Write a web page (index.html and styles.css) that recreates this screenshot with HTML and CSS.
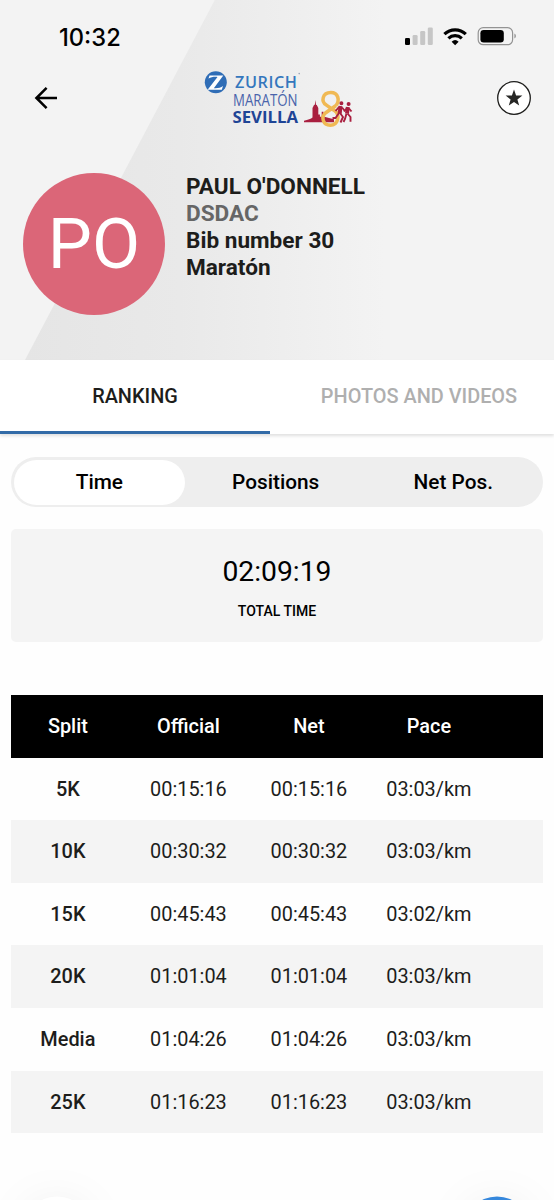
FILE: index.html
```html
<!DOCTYPE html>
<html lang="en">
<head>
    <meta charset="UTF-8">
    <meta name="viewport" content="width=device-width, initial-scale=1.0">
    <link rel="stylesheet" href="styles.css">
    <title>Paul O'Donnell - Ranking</title>
</head>
<body>
    <header class="header">
        <div class="status-bar">
            <span class="clock">10:32</span>
            <svg class="status-icons" width="112" height="20" viewBox="0 0 112 20">
                <rect x="0" y="11" width="5" height="7" rx="1.3" fill="#000"/>
                <rect x="7.6" y="8" width="5" height="10" rx="1.3" fill="#c6c6c6"/>
                <rect x="15.2" y="4" width="5" height="14" rx="1.3" fill="#c6c6c6"/>
                <rect x="22.8" y="0.5" width="5" height="17.5" rx="1.3" fill="#c6c6c6"/>
                <g fill="none" stroke="#000" stroke-width="3.2">
                    <path d="M39.4 7.2a15.5 15.5 0 0 1 21.4 0"/>
                    <path d="M43.4 11.3a9.8 9.8 0 0 1 13.4 0"/>
                </g>
                <path d="M46.6 14.7a5.2 5.2 0 0 1 7 0L50.1 18.2z" fill="#000"/>
                <rect x="73.2" y="0.7" width="34.4" height="17" rx="5" fill="none" stroke="#939393" stroke-width="1.2"/>
                <rect x="75.4" y="2.9" width="23.4" height="12.7" rx="3.3" fill="#000"/>
                <path d="M109.4 6.6v5a2.8 2.8 0 0 0 0-5z" fill="#939393"/>
            </svg>
        </div>

        <nav class="top-nav">
            <svg class="back" width="24" height="24" viewBox="0 0 24 24">
                <path d="M12.6 1.8L2.4 12l10.2 10.2M2.4 12h20.6" fill="none" stroke="#000" stroke-width="2.5"/>
            </svg>
            <svg class="logo" width="150" height="60" viewBox="0 0 150 60">
                <circle cx="11.8" cy="12.3" r="11" fill="#2f6db6"/>
                <path d="M5.5 5.4h13.8L9.8 18.2c4 .2 6.9-.2 9.2-2.1l-1.2 3.6H3.6L13.5 6.9c-3.7-.2-6.5.1-9 1.7z" fill="#fff"/>
                <text class="logo-zurich" x="31" y="18" textLength="62">ZURICH</text>
                <text class="logo-maraton" x="29" y="36.3" textLength="64.5" lengthAdjust="spacingAndGlyphs">MARATÓN</text>
                <text class="logo-sevilla" x="28.5" y="52.6" textLength="65.5" lengthAdjust="spacingAndGlyphs">SEVILLA</text>
                <circle cx="95.2" cy="3.6" r="0.8" fill="#9aa5b5"/>
                <!-- cathedral skyline -->
                <path d="M100 52.3v-1.5c4-1.2 7-1.8 8.5-3.4V38l1.5-3 .8-.2.6-4.8.6 4.8.8.2 1.5 3v6.5h1.6v2.3h1.8v-5h1.8v4.7l5.5 1.4 5 1.3v3.1z" fill="#a91f3f"/>
                <!-- the 8 ribbon -->
                <path d="M132 35.5c4-5 2.4-13-5.2-13-8.4 0-10.2 9-4.4 12.6l8.3 5.6c6 4.8 3 14.6-4.3 14.6-7.6 0-9.8-8.4-4.6-12.6l10.2-7.2" fill="none" stroke="#f0b954" stroke-width="3.5"/>
                <!-- runners -->
                <g fill="none" stroke="#a91f3f" stroke-width="2">
                    <circle cx="137.4" cy="33.2" r="1" fill="#a91f3f"/>
                    <path d="M136.5 36l-.8 7.5" stroke-width="4"/>
                    <path d="M135 37l-3.4 4M138 37.5l3 3.5M136 43l3 4-2.5 5.5M135 43l-3.5 5h-3" stroke-width="1.9"/>
                    <circle cx="144.6" cy="34" r="1" fill="#a91f3f"/>
                    <path d="M143.8 37l-.8 6.5" stroke-width="4"/>
                    <path d="M143 38l-3 3.5M145 38.5l2.5 3M143.5 43.5l3 3.5v4.8M142.5 43.5l-1.5 5.5-1.5 3" stroke-width="1.9"/>
                </g>
            </svg>
            <svg class="favourite" width="36" height="36" viewBox="0 0 36 36">
                <circle cx="18" cy="18" r="16.3" fill="#fff" stroke="#1d1d1b" stroke-width="1.3"/>
                <path d="M18 9.6l2.1 5.9 6.3.1-5 3.9 1.8 6-5.2-3.5-5.2 3.5 1.8-6-5-3.9 6.3-.1z" fill="#262624"/>
            </svg>
        </nav>

        <div class="profile">
            <div class="avatar">PO</div>
            <div class="runner">
                <div>PAUL O'DONNELL</div>
                <div class="club">DSDAC</div>
                <div>Bib number 30</div>
                <div>Maratón</div>
            </div>
        </div>
    </header>

    <div class="tabs">
        <div class="tab active">RANKING</div>
        <div class="tab">PHOTOS AND VIDEOS</div>
    </div>

    <main class="content">
        <div class="segments">
            <div class="segment selected">Time</div>
            <div class="segment">Positions</div>
            <div class="segment">Net Pos.</div>
        </div>

        <div class="total">
            <div class="total-time">02:09:19</div>
            <div class="total-label">TOTAL TIME</div>
        </div>

        <div class="splits">
            <div class="row head"><span>Split</span><span>Official</span><span>Net</span><span>Pace</span></div>
            <div class="row"><span>5K</span><span>00:15:16</span><span>00:15:16</span><span>03:03/km</span></div>
            <div class="row"><span>10K</span><span>00:30:32</span><span>00:30:32</span><span>03:03/km</span></div>
            <div class="row"><span>15K</span><span>00:45:43</span><span>00:45:43</span><span>03:02/km</span></div>
            <div class="row"><span>20K</span><span>01:01:04</span><span>01:01:04</span><span>03:03/km</span></div>
            <div class="row"><span>Media</span><span>01:04:26</span><span>01:04:26</span><span>03:03/km</span></div>
            <div class="row"><span>25K</span><span>01:16:23</span><span>01:16:23</span><span>03:03/km</span></div>
        </div>
    </main>

    <svg class="fabs" width="554" height="60" viewBox="0 0 554 60">
        <circle class="fab fab-left" cx="57" cy="90.5" r="34"/>
        <circle class="fab fab-right" cx="497" cy="90.5" r="34"/>
    </svg>
</body>
</html>
```

FILE: styles.css
```css
* {
    box-sizing: border-box;
}

body {
    margin: 0;
    height: 1200px;
    overflow: hidden;
    position: relative;
    background-color: #fefefe;
    color: #1d1d1b;
    font-family: Roboto, sans-serif;
}

.header {
    height: 360px;
    padding-top: 24px;
    /* diagonal band fading out to the right */
    background:
        linear-gradient(117.8deg, #f3f3f3 0, #f3f3f3 189.5px, transparent 190.5px),
        linear-gradient(90deg, #e5e5e5 25px, #e9e9e9 180px, #f3f3f3 385px);
}

.status-bar {
    display: flex;
    justify-content: space-between;
    height: 48px;
    padding: 0 37px 0 59px;
}

.clock {
    font-family: Inter, sans-serif;
    font-size: 23.7px;
    font-weight: 550;
    line-height: 27px;
    color: #000;
}

.status-icons {
    margin-top: 3px;
}

.top-nav {
    display: flex;
    align-items: flex-start;
    height: 100px;
    padding: 0 22px 0 33.5px;
}

.back {
    margin-top: 14px;
}

.logo {
    margin: -2px 0 0 146.5px;
    overflow: visible;
}

.favourite {
    margin: 8px 0 0 auto;
}

.logo-zurich {
    font-family: "Open Sans", sans-serif;
    font-size: 16.2px;
    font-weight: 600;
    fill: #3477bd;
}

.logo-maraton {
    font-family: "Open Sans", sans-serif;
    font-size: 15.5px;
    font-weight: 400;
    fill: #4a64ab;
}

.logo-sevilla {
    font-family: "Open Sans", sans-serif;
    font-size: 16.5px;
    font-weight: 700;
    fill: #1f4596;
}

.profile {
    display: flex;
    padding: 1px 0 0 23px;
}

.avatar {
    display: flex;
    align-items: center;
    justify-content: center;
    width: 142px;
    height: 142px;
    padding-bottom: 1px;
    border-radius: 50%;
    background-color: #db6678;
    color: #fff;
    font-size: 70px;
}

.runner {
    margin-left: 21px;
    font-size: 22.6px;
    font-weight: 700;
    line-height: 27px;
}

.club {
    color: #666;
}

.tabs {
    display: flex;
    height: 74px;
    background-color: #fff;
    box-shadow: 0 2px 3px rgba(0, 0, 0, 0.12);
}

.tab {
    flex: 1;
    padding-left: 14px;
    line-height: 73px;
    text-align: center;
    font-size: 19.9px;
    font-weight: 500;
    color: #afafaf;
}

.tab.active {
    flex: none;
    width: 270px;
    padding: 0;
    color: #1d1d1b;
    border-bottom: 3px solid #326ba7;
}

.content {
    padding: 23px 11.5px 0 11.4px;
}

.segments {
    display: flex;
    height: 50px;
    padding: 2.5px;
    border-radius: 25px;
    background-color: #eee;
}

.segment {
    flex: 1;
    padding-left: 4px;
    line-height: 45px;
    text-align: center;
    font-size: 20.8px;
    font-weight: 500;
    color: #000;
}

.segment.selected {
    flex: none;
    width: 171px;
    padding: 0;
    border-radius: 23px;
    background-color: #fff;
}

.total {
    height: 113px;
    margin-top: 22.4px;
    padding-top: 25px;
    border-radius: 5px;
    background-color: #f4f4f4;
    text-align: center;
    color: #000;
}

.total-time {
    font-size: 28.3px;
    line-height: 36px;
}

.total-label {
    margin-top: 11.5px;
    font-size: 14px;
    font-weight: 500;
    line-height: 18px;
}

.splits {
    margin-top: 52.6px;
}

.row {
    display: grid;
    grid-template-columns: 113px 128px 113px 127px;
    height: 62.6px;
    line-height: 63px;
    text-align: center;
    font-size: 19.9px;
}

.row:nth-child(odd) {
    background-color: #f4f4f4;
}

.row span:first-child {
    font-weight: 500;
}

.row.head {
    background-color: #000;
    color: #fff;
    font-weight: 500;
}

/* floating buttons over the bottom edge */
.fabs {
    position: absolute;
    left: 0;
    bottom: 0;
    overflow: hidden;
}

.fab {
    filter: drop-shadow(0 4px 20px rgba(0, 0, 0, 0.06));
}

.fab-left {
    fill: #fff;
}

.fab-right {
    fill: #3587dc;
}
```
